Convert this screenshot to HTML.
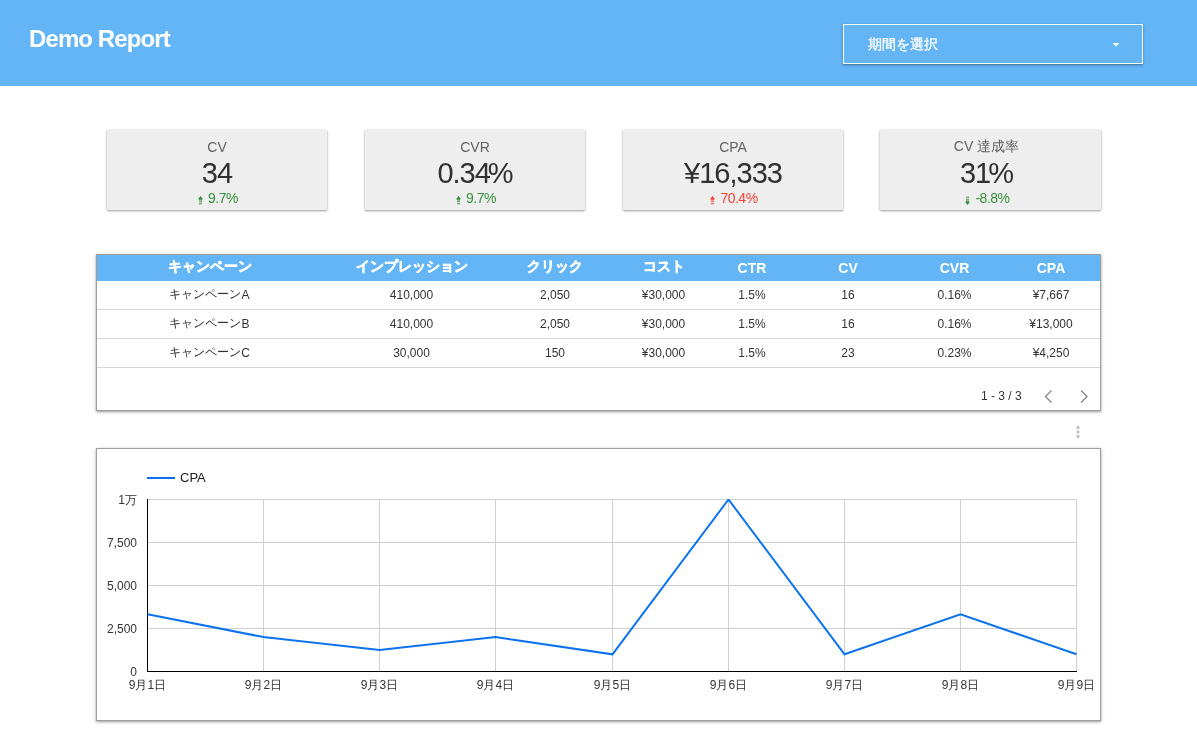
<!DOCTYPE html>
<html><head><meta charset="utf-8"><style>
*{box-sizing:border-box}
html,body{margin:0;padding:0;width:1197px;height:734px;overflow:hidden;background:#fff;font-family:"Liberation Sans",sans-serif}
#root{position:absolute;left:0;top:0;width:1197px;height:734px;will-change:transform}
.abs{position:absolute}
#hdr{position:absolute;left:0;top:0;width:1197px;height:86px;background:#64b5f6}
#title{position:absolute;left:29px;top:27px;font-size:24px;font-weight:bold;color:#fff;line-height:24px;white-space:nowrap;letter-spacing:-0.9px}
#dd{position:absolute;left:843px;top:24px;width:300px;height:40px;border:1px solid #fff;box-shadow:0 1px 2px rgba(0,0,0,.3),0 1px 4px rgba(0,0,0,.12)}
#ddtxt{position:absolute;left:868px;top:36px;font-size:14px;color:#fff;line-height:17px;white-space:nowrap;-webkit-text-stroke:0.3px #fff}
.card{position:absolute;top:130px;width:220px;height:80px;background:#eee;box-shadow:0 1px 2px rgba(0,0,0,.35),0 0 3px rgba(0,0,0,.12)}
.card .lbl{position:absolute;left:0;width:100%;top:9px;text-align:center;font-size:14px;color:#616161;line-height:16px;white-space:nowrap}
.card .val{position:absolute;left:0;width:100%;top:27px;text-align:center;font-size:29px;color:#303030;line-height:32px;white-space:nowrap;letter-spacing:-1px}
.card .chg{position:absolute;left:1px;width:100%;top:61px;text-align:center;font-size:14px;letter-spacing:-0.5px;line-height:15px;white-space:nowrap}
.g{color:#388e3c}.r{color:#f44336}
.arr{display:inline-block;vertical-align:middle;margin-right:5px;position:relative;top:1px}
#tbl{position:absolute;left:96px;top:254px;width:1005px;height:157px;border:1px solid #9e9e9e;box-shadow:0 1px 2px rgba(0,0,0,.3),0 1px 5px rgba(0,0,0,.15)}
#thead{position:absolute;left:0;top:0;width:100%;height:26px;background:#64b5f6}
.hline{position:absolute;left:0;width:100%;height:1px;background:#d6d6d6}
.c{position:absolute;width:200px;text-align:center;white-space:nowrap}
.th{font-size:14px;font-weight:bold;color:#fff;line-height:16px}
.cj{-webkit-text-stroke:0.5px #fff}
.td{font-size:12px;color:#333;line-height:14px}
#pg{position:absolute;left:981px;top:389px;font-size:12px;color:#333;line-height:14px;white-space:nowrap}
#chart{position:absolute;left:96px;top:448px;width:1005px;height:273px;border:1px solid #9e9e9e;box-shadow:0 1px 2px rgba(0,0,0,.3),0 1px 5px rgba(0,0,0,.15)}
.ax{font-size:12px;color:#333;line-height:14px;white-space:nowrap;position:absolute}
</style></head><body><div id="root">
<div id="hdr"></div><div id="title">Demo Report</div><div id="dd"></div><div id="ddtxt">期間を選択</div>
<svg class="abs" style="left:1112px;top:43px" width="8" height="4" viewBox="0 0 8 4"><path d="M0.5 0H7.5L4 3.5Z" fill="#fff"/></svg>
<div class="card" style="left:107px;width:220px"><div style="position:absolute;left:0;top:0;width:220px;height:80px"><div class="lbl" style="">CV</div><div class="val">34</div><div class="chg g"><svg class="arr" width="5" height="9" viewBox="0 0 5 9"><path d="M2.5 0L5 3.2H0Z" fill="currentColor"/><rect x="1" y="3.2" width="3" height="1.3" fill="currentColor"/><rect x="1" y="5.2" width="3" height="1.1" fill="currentColor" opacity=".8"/><rect x="1" y="7" width="3" height="1" fill="currentColor" opacity=".6"/><rect x="1" y="8.2" width="3" height=".8" fill="currentColor" opacity=".4"/></svg>9.7%</div></div></div>
<div class="card" style="left:365px;width:220px"><div style="position:absolute;left:0;top:0;width:220px;height:80px"><div class="lbl" style="">CVR</div><div class="val">0.34<span style="margin-left:-2px">%</span></div><div class="chg g"><svg class="arr" width="5" height="9" viewBox="0 0 5 9"><path d="M2.5 0L5 3.2H0Z" fill="currentColor"/><rect x="1" y="3.2" width="3" height="1.3" fill="currentColor"/><rect x="1" y="5.2" width="3" height="1.1" fill="currentColor" opacity=".8"/><rect x="1" y="7" width="3" height="1" fill="currentColor" opacity=".6"/><rect x="1" y="8.2" width="3" height=".8" fill="currentColor" opacity=".4"/></svg>9.7%</div></div></div>
<div class="card" style="left:623px;width:220px"><div style="position:absolute;left:0;top:0;width:220px;height:80px"><div class="lbl" style="">CPA</div><div class="val">¥16,333</div><div class="chg r"><svg class="arr" width="5" height="9" viewBox="0 0 5 9"><path d="M2.5 0L5 3.2H0Z" fill="currentColor"/><rect x="1" y="3.2" width="3" height="1.3" fill="currentColor"/><rect x="1" y="5.2" width="3" height="1.1" fill="currentColor" opacity=".8"/><rect x="1" y="7" width="3" height="1" fill="currentColor" opacity=".6"/><rect x="1" y="8.2" width="3" height=".8" fill="currentColor" opacity=".4"/></svg>70.4%</div></div></div>
<div class="card" style="left:880px;width:221px"><div style="position:absolute;left:0;top:0;width:213px;height:80px"><div class="lbl" style="top:8px">CV 達成率</div><div class="val">31<span style="margin-left:-2px">%</span></div><div class="chg g"><svg class="arr" width="5" height="9" viewBox="0 0 5 9"><path d="M2.5 9L5 5.8H0Z" fill="currentColor"/><rect x="1" y="4.5" width="3" height="1.3" fill="currentColor"/><rect x="1" y="2.7" width="3" height="1.1" fill="currentColor" opacity=".8"/><rect x="1" y="1" width="3" height="1" fill="currentColor" opacity=".6"/><rect x="1" y="0" width="3" height=".8" fill="currentColor" opacity=".4"/></svg>-8.8%</div></div></div>
<div id="tbl"><div id="thead"></div><div class="c th cj" style="left:12.5px;top:3px">キャンペーン</div><div class="c th cj" style="left:214.5px;top:3px">インプレッション</div><div class="c th cj" style="left:358px;top:3px">クリック</div><div class="c th cj" style="left:466.5px;top:3px">コスト</div><div class="c th" style="left:555px;top:5px">CTR</div><div class="c th" style="left:651px;top:5px">CV</div><div class="c th" style="left:757.5px;top:5px">CVR</div><div class="c th" style="left:854px;top:5px">CPA</div><div class="c td" style="left:12.5px;top:33px"><span style="position:relative;top:-1px">キャンペーン</span>A</div><div class="c td" style="left:214.5px;top:33px">410,000</div><div class="c td" style="left:358px;top:33px">2,050</div><div class="c td" style="left:466.5px;top:33px">¥30,000</div><div class="c td" style="left:555px;top:33px">1.5%</div><div class="c td" style="left:651px;top:33px">16</div><div class="c td" style="left:757.5px;top:33px">0.16%</div><div class="c td" style="left:854px;top:33px">¥7,667</div><div class="hline" style="top:54px"></div><div class="c td" style="left:12.5px;top:62px"><span style="position:relative;top:-1px">キャンペーン</span>B</div><div class="c td" style="left:214.5px;top:62px">410,000</div><div class="c td" style="left:358px;top:62px">2,050</div><div class="c td" style="left:466.5px;top:62px">¥30,000</div><div class="c td" style="left:555px;top:62px">1.5%</div><div class="c td" style="left:651px;top:62px">16</div><div class="c td" style="left:757.5px;top:62px">0.16%</div><div class="c td" style="left:854px;top:62px">¥13,000</div><div class="hline" style="top:83px"></div><div class="c td" style="left:12.5px;top:91px"><span style="position:relative;top:-1px">キャンペーン</span>C</div><div class="c td" style="left:214.5px;top:91px">30,000</div><div class="c td" style="left:358px;top:91px">150</div><div class="c td" style="left:466.5px;top:91px">¥30,000</div><div class="c td" style="left:555px;top:91px">1.5%</div><div class="c td" style="left:651px;top:91px">23</div><div class="c td" style="left:757.5px;top:91px">0.23%</div><div class="c td" style="left:854px;top:91px">¥4,250</div><div class="hline" style="top:112px"></div></div>
<div id="pg">1 - 3 / 3</div>
<svg class="abs" style="left:1040px;top:386px" width="55" height="20" viewBox="0 0 55 20"><path d="M11.5 4.5L5.5 10.5L11.5 16.5" fill="none" stroke="#8a8a8a" stroke-width="1.4"/><path d="M41 4.5L47 10.5L41 16.5" fill="none" stroke="#8a8a8a" stroke-width="1.4"/></svg>
<svg class="abs" style="left:1074px;top:424px" width="8" height="16" viewBox="0 0 8 16"><circle cx="4" cy="3.5" r="1.7" fill="#c2c2c2"/><circle cx="4" cy="8" r="1.7" fill="#c2c2c2"/><circle cx="4" cy="12.5" r="1.7" fill="#c2c2c2"/></svg>
<div id="chart"></div>
<svg class="abs" style="left:0;top:0" width="1197" height="734"><line x1="148" y1="628.5" x2="1077" y2="628.5" stroke="#d0d0d0" stroke-width="1"/><line x1="148" y1="585.5" x2="1077" y2="585.5" stroke="#d0d0d0" stroke-width="1"/><line x1="148" y1="542.5" x2="1077" y2="542.5" stroke="#d0d0d0" stroke-width="1"/><line x1="148" y1="499.5" x2="1077" y2="499.5" stroke="#d0d0d0" stroke-width="1"/><line x1="263.5" y1="499" x2="263.5" y2="671" stroke="#d0d0d0" stroke-width="1"/><line x1="379.5" y1="499" x2="379.5" y2="671" stroke="#d0d0d0" stroke-width="1"/><line x1="495.5" y1="499" x2="495.5" y2="671" stroke="#d0d0d0" stroke-width="1"/><line x1="612.5" y1="499" x2="612.5" y2="671" stroke="#d0d0d0" stroke-width="1"/><line x1="728.5" y1="499" x2="728.5" y2="671" stroke="#d0d0d0" stroke-width="1"/><line x1="844.5" y1="499" x2="844.5" y2="671" stroke="#d0d0d0" stroke-width="1"/><line x1="960.5" y1="499" x2="960.5" y2="671" stroke="#d0d0d0" stroke-width="1"/><line x1="1076.5" y1="499" x2="1076.5" y2="671" stroke="#d0d0d0" stroke-width="1"/><line x1="147.5" y1="499" x2="147.5" y2="672" stroke="#000" stroke-width="1"/><line x1="147" y1="671.5" x2="1077" y2="671.5" stroke="#000" stroke-width="1"/><defs><clipPath id="pc"><rect x="140" y="499" width="945" height="180"/></clipPath></defs><polyline clip-path="url(#pc)" points="147.5,614.2 263.5,637.1 379.5,650.0 495.5,637.1 612.5,654.3 728.5,499.5 844.5,654.3 960.5,614.2 1076.5,654.3" fill="none" stroke="#0b72ee" stroke-width="2" stroke-linejoin="miter" stroke-miterlimit="10"/><line x1="147" y1="478" x2="175" y2="478" stroke="#0b72ee" stroke-width="2"/></svg>
<div class="ax" style="left:180px;top:471px;font-size:13px;color:#212121">CPA</div>
<div class="ax" style="right:1060px;top:665.0px;text-align:right">0</div>
<div class="ax" style="right:1060px;top:622.0px;text-align:right">2,500</div>
<div class="ax" style="right:1060px;top:579.0px;text-align:right">5,000</div>
<div class="ax" style="right:1060px;top:536.0px;text-align:right">7,500</div>
<div class="ax" style="right:1060px;top:493.0px;text-align:right">1万</div>
<div class="ax" style="left:97.5px;width:100px;text-align:center;top:678px">9月1日</div>
<div class="ax" style="left:213.5px;width:100px;text-align:center;top:678px">9月2日</div>
<div class="ax" style="left:329.5px;width:100px;text-align:center;top:678px">9月3日</div>
<div class="ax" style="left:445.5px;width:100px;text-align:center;top:678px">9月4日</div>
<div class="ax" style="left:562.5px;width:100px;text-align:center;top:678px">9月5日</div>
<div class="ax" style="left:678.5px;width:100px;text-align:center;top:678px">9月6日</div>
<div class="ax" style="left:794.5px;width:100px;text-align:center;top:678px">9月7日</div>
<div class="ax" style="left:910.5px;width:100px;text-align:center;top:678px">9月8日</div>
<div class="ax" style="left:1026.5px;width:100px;text-align:center;top:678px">9月9日</div>
</div></body></html>
